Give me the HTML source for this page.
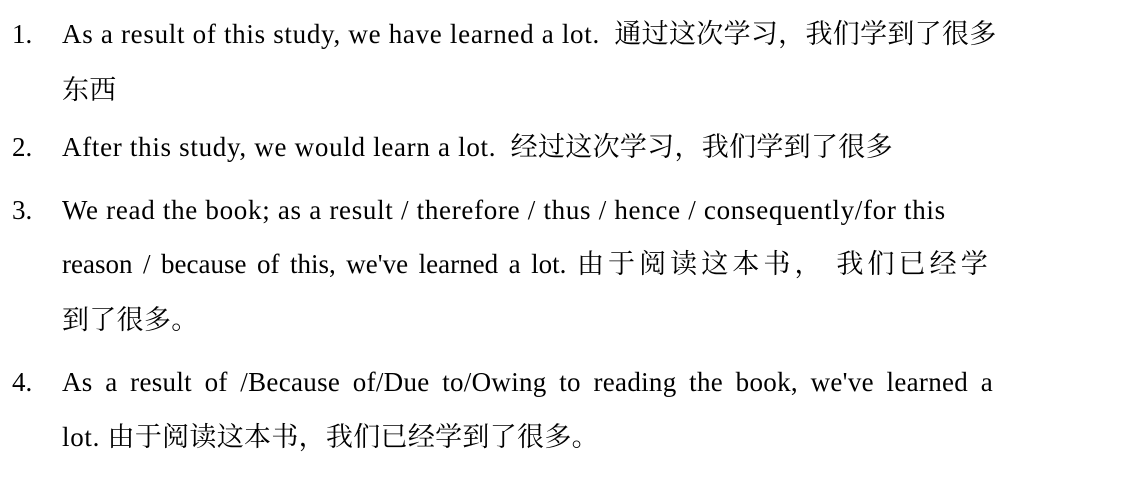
<!DOCTYPE html>
<html><head><meta charset="utf-8"><style>
body{margin:0;width:1135px;height:494px;background:#fff;position:relative;overflow:hidden;font-family:"Liberation Serif","Noto Serif CJK SC",serif;font-size:27px;color:#000;}
.l{position:absolute;left:62px;line-height:26px;white-space:nowrap;letter-spacing:0.7px}
.n{position:absolute;left:12px;line-height:26px}
.c{font-size:27px;letter-spacing:0.3px}
.m{margin-left:7px}
.j{text-align:justify;text-align-last:justify;white-space:normal}
</style></head><body>
<div class="n" style="top:21px">1.</div>
<div class="l" style="top:21px">As a result of this study, we have learned a lot. <span class="c m">通过这次学习，我们学到了很多</span></div>
<div class="l c" style="top:77px">东西</div>
<div class="n" style="top:134px">2.</div>
<div class="l" style="top:134px">After this study, we would learn a lot. <span class="c m">经过这次学习，我们学到了很多</span></div>
<div class="n" style="top:197px">3.</div>
<div class="l" style="top:197px">We read the book; as a result / therefore / thus / hence / consequently/for this</div>
<div class="l j" style="top:251px;width:926px;letter-spacing:0">reason / because of this, we've learned a lot. <span class="c">由于阅读这本书， 我们已经学</span></div>
<div class="l c" style="top:307px">到了很多。</div>
<div class="n" style="top:369px">4.</div>
<div class="l j" style="top:369px;width:931px;letter-spacing:0.3px">As a result of /Because of/Due to/Owing to reading the book, we've learned a</div>
<div class="l" style="top:424px">lot. <span class="c">由于阅读这本书，我们已经学到了很多。</span></div>
</body></html>
